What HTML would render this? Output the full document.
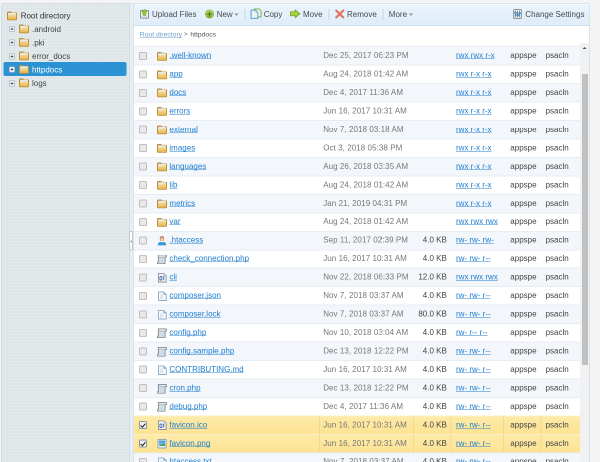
<!DOCTYPE html>
<html><head><meta charset="utf-8">
<style>
*{box-sizing:border-box;margin:0;padding:0}
html,body{width:600px;height:462px;overflow:hidden;background:#f4f4f4;font-family:"Liberation Sans",sans-serif;font-size:8px;color:#333}
#side{position:absolute;left:1px;top:3px;width:129px;height:470px;background:#dde5e8;border:1px solid #cfdce6;border-radius:3px 0 0 0;
 background-image:linear-gradient(rgba(255,255,255,.14) 1px,transparent 1px),linear-gradient(90deg,rgba(255,255,255,.14) 1px,transparent 1px);background-size:3px 3px}
.t{position:absolute;height:13.5px;line-height:13.5px;white-space:nowrap;color:#444}
.t svg.ex{position:absolute;left:7px;top:3.9px}
.t svg{position:absolute;top:2.25px}
.t span{position:absolute}
.t.sel .tx{color:#fff}
#selbg{position:absolute;left:1.7px;top:58px;width:122.6px;height:13.8px;background:#2b92d4;border-radius:2px}
#split{position:absolute;left:128.8px;top:231px;width:4px;height:19.6px;background:#fff;border:1px solid #bfc8ce;border-radius:1px}
#main{position:absolute;left:133px;top:3px;width:457px;height:470px;background:#fff;border:1px solid #d6e4ee;border-radius:0 3px 0 0;overflow:hidden}
#tb{position:absolute;left:0;top:0;right:0;height:22px;background:linear-gradient(#eaf4fc,#dfedf9);box-shadow:inset 0 1px #f2f8fd;border-bottom:1px solid #cde0f0}
.tbi{position:absolute;top:-0.5px;height:22px;line-height:22px;white-space:nowrap;color:#4a4a4a}
.tbic{position:absolute}
.sep{position:absolute;top:5px;width:0.8px;height:11px;background:#c6d6e2}
.car{position:absolute;top:9.3px;width:0;height:0;border-left:2.3px solid transparent;border-right:2.3px solid transparent;border-top:2.6px solid #8a8f94}
#bc{position:absolute;left:5.8px;top:19.8px;height:21px;line-height:21px;font-size:6.8px;color:#555;white-space:nowrap}
#bc a{color:#6b9dcc;text-decoration:underline;text-decoration-skip-ink:none}
.r{position:absolute;left:0;width:446px;height:18.46px;line-height:18.46px;background:#fff;border-top:1px solid #e6edf3;white-space:nowrap}
.r.odd{background:#f3f7fb}
.r.sel{background:linear-gradient(#feeba9,#fde393);border-top-color:#fdf0c6}
.cb{position:absolute;left:5.1px;top:4.7px;width:8px;height:8px;border:1px solid #bfbfbf;border-radius:1.5px;background:#e8e8e8}
.cb.on{border-color:#8a9aa5;background:#f0f0f0}
.cb.on:after{content:"";position:absolute;left:1.6px;top:0.2px;width:2.2px;height:4px;border-right:1.3px solid #222;border-bottom:1.3px solid #222;transform:rotate(40deg)}
.ic{position:absolute;left:23px;top:3.8px}
.ic.fo{top:4.6px}
a{color:#1f7dd0;text-decoration:underline;text-decoration-skip-ink:none}
.nm,.dt,.sz,.pm,.ow,.gr{top:-0.6px}
.nm{position:absolute;left:35.4px}
.dt{position:absolute;left:189.2px;color:#777;letter-spacing:0.065px}
.sz{position:absolute;right:133.2px;color:#444}
.pm{position:absolute;left:322px}
.ow{position:absolute;left:376.3px;color:#444}
.gr{position:absolute;left:411.6px;color:#444}
.r i{display:none}
.r.sel i{display:block;position:absolute;top:0;bottom:0;width:1px;background:#f2d98c}
.s1{left:185px}.s2{left:279px}.s3{left:316.5px}.s4{left:369px}.s5{left:406.5px}
#sb{position:absolute;left:446px;top:39px;width:9px;height:430px;background:#f1f1f1}
#sb .up{position:absolute;left:2.5px;top:4px;width:0;height:0;border-left:2.2px solid transparent;border-right:2.2px solid transparent;border-bottom:2.4px solid #505050}
#sb .th{position:absolute;left:2px;top:31px;width:6px;height:291px;background:#c1c1c1}
</style></head><body><div id="wrap" style="position:absolute;left:0;top:0;width:1200px;height:924px;transform:scale(.5);transform-origin:0 0;will-change:transform;overflow:hidden"><div style="zoom:2;position:absolute;left:0;top:0;width:600px;height:462px;overflow:hidden">
<svg width="0" height="0" style="position:absolute"><defs>
<linearGradient id="fg" x1="0" y1="0" x2="0" y2="1"><stop offset="0" stop-color="#f8de92"/><stop offset="1" stop-color="#e5b453"/></linearGradient>
<linearGradient id="gg" x1="0" y1="0" x2="0" y2="1"><stop offset="0" stop-color="#c6e66a"/><stop offset="1" stop-color="#86b52c"/></linearGradient>
</defs></svg>
<div id="side">
 <div id="selbg"></div>
 <div class="t" style="left:0;top:5.1px"><svg style="left:5px" width="10" height="9" viewBox="0 0 10 9"><path d="M0 1.2 Q0 0 1.2 0 H4.2 L5 0.9 H8.8 Q10 0.9 10 2.1 V7.8 Q10 8.8 8.8 8.8 H1.2 Q0 8.8 0 7.8Z" fill="#be8c33"/><rect x="1.1" y="1.3" width="7.8" height="2.6" fill="#e6eaec"/><path d="M0.9 3.9 H4 L4.8 2.9 H9.1 V7.5 Q9.1 8 8.6 8 H1.4 Q0.9 8 0.9 7.5Z" fill="url(#fg)"/></svg><span class="tx" style="left:18.7px;color:#333">Root directory</span></div>
<div class="t" style="left:0;top:18.25px"><svg class="ex" width="6" height="6" viewBox="0 0 6 6"><rect x="0.4" y="0.4" width="5.2" height="5.2" rx="0.6" fill="#fbfcfd" stroke="#a2b5c3" stroke-width="0.8"/><path d="M1.7 3 H4.3 M3 1.7 V4.3" stroke="#2c2c2c" stroke-width="0.8"/></svg><svg style="left:17px" width="10" height="9" viewBox="0 0 10 9"><path d="M0 1.2 Q0 0 1.2 0 H4.2 L5 0.9 H8.8 Q10 0.9 10 2.1 V7.8 Q10 8.8 8.8 8.8 H1.2 Q0 8.8 0 7.8Z" fill="#be8c33"/><rect x="1.1" y="1.3" width="7.8" height="2.6" fill="#e6eaec"/><path d="M0.9 3.9 H4 L4.8 2.9 H9.1 V7.5 Q9.1 8 8.6 8 H1.4 Q0.9 8 0.9 7.5Z" fill="url(#fg)"/></svg><span class="tx" style="left:30px">.android</span></div>
<div class="t" style="left:0;top:31.85px"><svg class="ex" width="6" height="6" viewBox="0 0 6 6"><rect x="0.4" y="0.4" width="5.2" height="5.2" rx="0.6" fill="#fbfcfd" stroke="#a2b5c3" stroke-width="0.8"/><path d="M1.7 3 H4.3 M3 1.7 V4.3" stroke="#2c2c2c" stroke-width="0.8"/></svg><svg style="left:17px" width="10" height="9" viewBox="0 0 10 9"><path d="M0 1.2 Q0 0 1.2 0 H4.2 L5 0.9 H8.8 Q10 0.9 10 2.1 V7.8 Q10 8.8 8.8 8.8 H1.2 Q0 8.8 0 7.8Z" fill="#be8c33"/><rect x="1.1" y="1.3" width="7.8" height="2.6" fill="#e6eaec"/><path d="M0.9 3.9 H4 L4.8 2.9 H9.1 V7.5 Q9.1 8 8.6 8 H1.4 Q0.9 8 0.9 7.5Z" fill="url(#fg)"/></svg><span class="tx" style="left:30px">.pki</span></div>
<div class="t" style="left:0;top:45.45px"><svg class="ex" width="6" height="6" viewBox="0 0 6 6"><rect x="0.4" y="0.4" width="5.2" height="5.2" rx="0.6" fill="#fbfcfd" stroke="#a2b5c3" stroke-width="0.8"/><path d="M1.7 3 H4.3 M3 1.7 V4.3" stroke="#2c2c2c" stroke-width="0.8"/></svg><svg style="left:17px" width="10" height="9" viewBox="0 0 10 9"><path d="M0 1.2 Q0 0 1.2 0 H4.2 L5 0.9 H8.8 Q10 0.9 10 2.1 V7.8 Q10 8.8 8.8 8.8 H1.2 Q0 8.8 0 7.8Z" fill="#be8c33"/><rect x="1.1" y="1.3" width="7.8" height="2.6" fill="#e6eaec"/><path d="M0.9 3.9 H4 L4.8 2.9 H9.1 V7.5 Q9.1 8 8.6 8 H1.4 Q0.9 8 0.9 7.5Z" fill="url(#fg)"/></svg><span class="tx" style="left:30px">error_docs</span></div>
<div class="t sel" style="left:0;top:58.85px"><svg class="ex" width="6" height="6" viewBox="0 0 6 6"><rect x="0.4" y="0.4" width="5.2" height="5.2" rx="0.6" fill="#fbfcfd" stroke="#a2b5c3" stroke-width="0.8"/><path d="M1.7 3 H4.3 M3 1.7 V4.3" stroke="#2c2c2c" stroke-width="0.8"/></svg><svg style="left:17px" width="10" height="9" viewBox="0 0 10 9"><path d="M0 1.2 Q0 0 1.2 0 H4.2 L5 0.9 H8.8 Q10 0.9 10 2.1 V7.8 Q10 8.8 8.8 8.8 H1.2 Q0 8.8 0 7.8Z" fill="#be8c33"/><rect x="1.1" y="1.3" width="7.8" height="2.6" fill="#e6eaec"/><path d="M0.9 3.9 H4 L4.8 2.9 H9.1 V7.5 Q9.1 8 8.6 8 H1.4 Q0.9 8 0.9 7.5Z" fill="url(#fg)"/></svg><span class="tx" style="left:30px">httpdocs</span></div>
<div class="t" style="left:0;top:72.45px"><svg class="ex" width="6" height="6" viewBox="0 0 6 6"><rect x="0.4" y="0.4" width="5.2" height="5.2" rx="0.6" fill="#fbfcfd" stroke="#a2b5c3" stroke-width="0.8"/><path d="M1.7 3 H4.3 M3 1.7 V4.3" stroke="#2c2c2c" stroke-width="0.8"/></svg><svg style="left:17px" width="10" height="9" viewBox="0 0 10 9"><path d="M0 1.2 Q0 0 1.2 0 H4.2 L5 0.9 H8.8 Q10 0.9 10 2.1 V7.8 Q10 8.8 8.8 8.8 H1.2 Q0 8.8 0 7.8Z" fill="#be8c33"/><rect x="1.1" y="1.3" width="7.8" height="2.6" fill="#e6eaec"/><path d="M0.9 3.9 H4 L4.8 2.9 H9.1 V7.5 Q9.1 8 8.6 8 H1.4 Q0.9 8 0.9 7.5Z" fill="url(#fg)"/></svg><span class="tx" style="left:30px">logs</span></div>
</div>
<div id="gap" style="position:absolute;left:130px;top:3px;width:3px;height:470px;background:#eaeef0"></div>
<div id="split"><svg style="position:absolute;left:0.2px;top:8.2px" width="2" height="3" viewBox="0 0 2 3"><path d="M0.2 1.5 L1.8 0.2 V2.8Z" fill="#80878c"/></svg></div>
<div id="main">
 <div id="tb">
  <svg class="tbic" style="left:6px;top:4.8px" width="9" height="10" viewBox="0 0 9 10"><path d="M0.45 2 Q0.45 1.55 0.9 1.55 H8.1 Q8.55 1.55 8.55 2 V8.7 Q8.55 9.15 8.1 9.15 H0.9 Q0.45 9.15 0.45 8.7Z" fill="#f3f3f3" stroke="#85888b" stroke-width="0.9"/><path d="M1 6.6 H8 V8.6 H1Z" fill="#dadada"/><path d="M4.45 0.15 L7.3 3 H5.95 V6.2 H2.95 V3 H1.6Z" fill="#8fcd30" stroke="#5f9b1d" stroke-width="0.5"/></svg>
  <div class="tbi" style="left:18px">Upload Files</div>
  <svg class="tbic" style="left:70.8px;top:5.6px" width="9" height="9" viewBox="0 0 9 9"><circle cx="4.5" cy="4.5" r="4.1" fill="url(#gg)" stroke="#7aa62c" stroke-width="0.6"/><path d="M4.5 2 V7 M2 4.5 H7" stroke="#4b7a1c" stroke-width="1.3"/></svg>
  <div class="tbi" style="left:82.7px">New</div>
  <div class="car" style="left:100.5px"></div>
  <div class="sep" style="left:110.5px"></div>
  <svg class="tbic" style="left:116.6px;top:4.6px" width="11" height="10.5" viewBox="0 0 11 10.5"><path d="M3.9 0.5 H8.6 L10.5 2.4 V8.4 H3.9Z" fill="#f2f8ec" stroke="#78b43a" stroke-width="1"/><path d="M0.6 1.6 H5.1 L7.3 3.8 V9.9 H0.6Z" fill="#e9f2f9" stroke="#5c9fd4" stroke-width="1"/><path d="M4.9 1.6 V4 H7.3Z" fill="#9cc4e4"/></svg>
  <div class="tbi" style="left:129.7px">Copy</div>
  <svg class="tbic" style="left:156px;top:5.6px" width="10.5" height="8.6" viewBox="0 0 10.5 8.6"><path d="M0.4 2.2 H5.2 V0.4 L10 4.3 L5.2 8.2 V6.3 H0.4Z" fill="#a3d23a" stroke="#6c9a24" stroke-width="0.7" stroke-linejoin="round"/></svg>
  <div class="tbi" style="left:169px">Move</div>
  <div class="sep" style="left:194.7px"></div>
  <svg class="tbic" style="left:200.8px;top:5.5px" width="9.5" height="9" viewBox="0 0 9.5 9"><path d="M1.3 1.1 L8.2 7.9 M8.2 1.1 L1.3 7.9" stroke="#e0755f" stroke-width="2.2" stroke-linecap="round"/></svg>
  <div class="tbi" style="left:213px">Remove</div>
  <div class="sep" style="left:248.5px"></div>
  <div class="tbi" style="left:254.8px">More</div>
  <div class="car" style="left:274.8px"></div>
  <svg class="tbic" style="left:379px;top:4.9px" width="9" height="10" viewBox="0 0 9 10"><rect x="0.5" y="0.5" width="8" height="9" rx="1.2" fill="#dde1e4" stroke="#8b9297" stroke-width="0.9"/><rect x="1.1" y="1.1" width="6.8" height="2.6" fill="#fdfdfd"/><path d="M2.4 1.8 V7.8 M4.5 1.8 V7.8 M6.6 1.8 V7.8" stroke="#4d565d" stroke-width="0.7"/><rect x="1.2" y="2.6" width="2.4" height="2" rx="0.6" fill="#3b93d8"/><rect x="3.3" y="5.2" width="2.4" height="2" rx="0.6" fill="#3b93d8"/><rect x="5.4" y="3.2" width="2.4" height="2" rx="0.6" fill="#3b93d8"/></svg>
  <div class="tbi" style="left:391.3px">Change Settings</div>
 </div>
 <div id="bc"><a>Root directory</a> <span style="font-size:6.2px;color:#666;position:relative;top:-0.2px">&gt;</span> <span style="margin-left:0.8px">httpdocs</span></div>
 <div id="rows" style="position:absolute;left:0;top:-4px;width:457px">
<div class="r odd" style="top:46.20px"><span class="cb"></span><svg class="ic fo" width="10" height="9" viewBox="0 0 10 9"><path d="M0 1.2 Q0 0 1.2 0 H4.2 L5 0.9 H8.8 Q10 0.9 10 2.1 V7.8 Q10 8.8 8.8 8.8 H1.2 Q0 8.8 0 7.8Z" fill="#be8c33"/><rect x="1.1" y="1.3" width="7.8" height="2.6" fill="#e6eaec"/><path d="M0.9 3.9 H4 L4.8 2.9 H9.1 V7.5 Q9.1 8 8.6 8 H1.4 Q0.9 8 0.9 7.5Z" fill="url(#fg)"/></svg><a class="nm">.well-known</a><span class="dt">Dec 25, 2017 06:23 PM</span><span class="sz"></span><a class="pm">rwx rwx r-x</a><span class="ow">appspe</span><span class="gr">psacln</span><i class="s1"></i><i class="s2"></i><i class="s3"></i><i class="s4"></i><i class="s5"></i></div>
<div class="r" style="top:64.66px"><span class="cb"></span><svg class="ic fo" width="10" height="9" viewBox="0 0 10 9"><path d="M0 1.2 Q0 0 1.2 0 H4.2 L5 0.9 H8.8 Q10 0.9 10 2.1 V7.8 Q10 8.8 8.8 8.8 H1.2 Q0 8.8 0 7.8Z" fill="#be8c33"/><rect x="1.1" y="1.3" width="7.8" height="2.6" fill="#e6eaec"/><path d="M0.9 3.9 H4 L4.8 2.9 H9.1 V7.5 Q9.1 8 8.6 8 H1.4 Q0.9 8 0.9 7.5Z" fill="url(#fg)"/></svg><a class="nm">app</a><span class="dt">Aug 24, 2018 01:42 AM</span><span class="sz"></span><a class="pm">rwx r-x r-x</a><span class="ow">appspe</span><span class="gr">psacln</span><i class="s1"></i><i class="s2"></i><i class="s3"></i><i class="s4"></i><i class="s5"></i></div>
<div class="r odd" style="top:83.12px"><span class="cb"></span><svg class="ic fo" width="10" height="9" viewBox="0 0 10 9"><path d="M0 1.2 Q0 0 1.2 0 H4.2 L5 0.9 H8.8 Q10 0.9 10 2.1 V7.8 Q10 8.8 8.8 8.8 H1.2 Q0 8.8 0 7.8Z" fill="#be8c33"/><rect x="1.1" y="1.3" width="7.8" height="2.6" fill="#e6eaec"/><path d="M0.9 3.9 H4 L4.8 2.9 H9.1 V7.5 Q9.1 8 8.6 8 H1.4 Q0.9 8 0.9 7.5Z" fill="url(#fg)"/></svg><a class="nm">docs</a><span class="dt">Dec 4, 2017 11:36 AM</span><span class="sz"></span><a class="pm">rwx r-x r-x</a><span class="ow">appspe</span><span class="gr">psacln</span><i class="s1"></i><i class="s2"></i><i class="s3"></i><i class="s4"></i><i class="s5"></i></div>
<div class="r" style="top:101.58px"><span class="cb"></span><svg class="ic fo" width="10" height="9" viewBox="0 0 10 9"><path d="M0 1.2 Q0 0 1.2 0 H4.2 L5 0.9 H8.8 Q10 0.9 10 2.1 V7.8 Q10 8.8 8.8 8.8 H1.2 Q0 8.8 0 7.8Z" fill="#be8c33"/><rect x="1.1" y="1.3" width="7.8" height="2.6" fill="#e6eaec"/><path d="M0.9 3.9 H4 L4.8 2.9 H9.1 V7.5 Q9.1 8 8.6 8 H1.4 Q0.9 8 0.9 7.5Z" fill="url(#fg)"/></svg><a class="nm">errors</a><span class="dt">Jun 16, 2017 10:31 AM</span><span class="sz"></span><a class="pm">rwx r-x r-x</a><span class="ow">appspe</span><span class="gr">psacln</span><i class="s1"></i><i class="s2"></i><i class="s3"></i><i class="s4"></i><i class="s5"></i></div>
<div class="r odd" style="top:120.04px"><span class="cb"></span><svg class="ic fo" width="10" height="9" viewBox="0 0 10 9"><path d="M0 1.2 Q0 0 1.2 0 H4.2 L5 0.9 H8.8 Q10 0.9 10 2.1 V7.8 Q10 8.8 8.8 8.8 H1.2 Q0 8.8 0 7.8Z" fill="#be8c33"/><rect x="1.1" y="1.3" width="7.8" height="2.6" fill="#e6eaec"/><path d="M0.9 3.9 H4 L4.8 2.9 H9.1 V7.5 Q9.1 8 8.6 8 H1.4 Q0.9 8 0.9 7.5Z" fill="url(#fg)"/></svg><a class="nm">external</a><span class="dt">Nov 7, 2018 03:18 AM</span><span class="sz"></span><a class="pm">rwx r-x r-x</a><span class="ow">appspe</span><span class="gr">psacln</span><i class="s1"></i><i class="s2"></i><i class="s3"></i><i class="s4"></i><i class="s5"></i></div>
<div class="r" style="top:138.50px"><span class="cb"></span><svg class="ic fo" width="10" height="9" viewBox="0 0 10 9"><path d="M0 1.2 Q0 0 1.2 0 H4.2 L5 0.9 H8.8 Q10 0.9 10 2.1 V7.8 Q10 8.8 8.8 8.8 H1.2 Q0 8.8 0 7.8Z" fill="#be8c33"/><rect x="1.1" y="1.3" width="7.8" height="2.6" fill="#e6eaec"/><path d="M0.9 3.9 H4 L4.8 2.9 H9.1 V7.5 Q9.1 8 8.6 8 H1.4 Q0.9 8 0.9 7.5Z" fill="url(#fg)"/></svg><a class="nm">images</a><span class="dt">Oct 3, 2018 05:38 PM</span><span class="sz"></span><a class="pm">rwx r-x r-x</a><span class="ow">appspe</span><span class="gr">psacln</span><i class="s1"></i><i class="s2"></i><i class="s3"></i><i class="s4"></i><i class="s5"></i></div>
<div class="r odd" style="top:156.96px"><span class="cb"></span><svg class="ic fo" width="10" height="9" viewBox="0 0 10 9"><path d="M0 1.2 Q0 0 1.2 0 H4.2 L5 0.9 H8.8 Q10 0.9 10 2.1 V7.8 Q10 8.8 8.8 8.8 H1.2 Q0 8.8 0 7.8Z" fill="#be8c33"/><rect x="1.1" y="1.3" width="7.8" height="2.6" fill="#e6eaec"/><path d="M0.9 3.9 H4 L4.8 2.9 H9.1 V7.5 Q9.1 8 8.6 8 H1.4 Q0.9 8 0.9 7.5Z" fill="url(#fg)"/></svg><a class="nm">languages</a><span class="dt">Aug 26, 2018 03:35 AM</span><span class="sz"></span><a class="pm">rwx r-x r-x</a><span class="ow">appspe</span><span class="gr">psacln</span><i class="s1"></i><i class="s2"></i><i class="s3"></i><i class="s4"></i><i class="s5"></i></div>
<div class="r" style="top:175.42px"><span class="cb"></span><svg class="ic fo" width="10" height="9" viewBox="0 0 10 9"><path d="M0 1.2 Q0 0 1.2 0 H4.2 L5 0.9 H8.8 Q10 0.9 10 2.1 V7.8 Q10 8.8 8.8 8.8 H1.2 Q0 8.8 0 7.8Z" fill="#be8c33"/><rect x="1.1" y="1.3" width="7.8" height="2.6" fill="#e6eaec"/><path d="M0.9 3.9 H4 L4.8 2.9 H9.1 V7.5 Q9.1 8 8.6 8 H1.4 Q0.9 8 0.9 7.5Z" fill="url(#fg)"/></svg><a class="nm">lib</a><span class="dt">Aug 24, 2018 01:42 AM</span><span class="sz"></span><a class="pm">rwx r-x r-x</a><span class="ow">appspe</span><span class="gr">psacln</span><i class="s1"></i><i class="s2"></i><i class="s3"></i><i class="s4"></i><i class="s5"></i></div>
<div class="r odd" style="top:193.88px"><span class="cb"></span><svg class="ic fo" width="10" height="9" viewBox="0 0 10 9"><path d="M0 1.2 Q0 0 1.2 0 H4.2 L5 0.9 H8.8 Q10 0.9 10 2.1 V7.8 Q10 8.8 8.8 8.8 H1.2 Q0 8.8 0 7.8Z" fill="#be8c33"/><rect x="1.1" y="1.3" width="7.8" height="2.6" fill="#e6eaec"/><path d="M0.9 3.9 H4 L4.8 2.9 H9.1 V7.5 Q9.1 8 8.6 8 H1.4 Q0.9 8 0.9 7.5Z" fill="url(#fg)"/></svg><a class="nm">metrics</a><span class="dt">Jan 21, 2019 04:31 PM</span><span class="sz"></span><a class="pm">rwx r-x r-x</a><span class="ow">appspe</span><span class="gr">psacln</span><i class="s1"></i><i class="s2"></i><i class="s3"></i><i class="s4"></i><i class="s5"></i></div>
<div class="r" style="top:212.34px"><span class="cb"></span><svg class="ic fo" width="10" height="9" viewBox="0 0 10 9"><path d="M0 1.2 Q0 0 1.2 0 H4.2 L5 0.9 H8.8 Q10 0.9 10 2.1 V7.8 Q10 8.8 8.8 8.8 H1.2 Q0 8.8 0 7.8Z" fill="#be8c33"/><rect x="1.1" y="1.3" width="7.8" height="2.6" fill="#e6eaec"/><path d="M0.9 3.9 H4 L4.8 2.9 H9.1 V7.5 Q9.1 8 8.6 8 H1.4 Q0.9 8 0.9 7.5Z" fill="url(#fg)"/></svg><a class="nm">var</a><span class="dt">Aug 24, 2018 01:42 AM</span><span class="sz"></span><a class="pm">rwx rwx rwx</a><span class="ow">appspe</span><span class="gr">psacln</span><i class="s1"></i><i class="s2"></i><i class="s3"></i><i class="s4"></i><i class="s5"></i></div>
<div class="r odd" style="top:230.80px"><span class="cb"></span><svg class="ic" width="10" height="10" viewBox="0 0 10 10"><path d="M2.8 3.5 Q2.6 0.6 4.9 0.6 Q7.3 0.6 7.1 3.5 Q7 5.8 4.9 5.8 Q2.9 5.8 2.8 3.5Z" fill="#b77a4e"/><ellipse cx="4.95" cy="3.9" rx="1.55" ry="1.75" fill="#f3cdb3"/><path d="M0.8 9.9 Q0.8 6.6 3.6 6.4 L4.95 7 L6.3 6.4 Q9.2 6.6 9.2 9.9Z" fill="#3a97d8"/></svg><a class="nm">.htaccess</a><span class="dt">Sep 11, 2017 02:39 PM</span><span class="sz">4.0 KB</span><a class="pm">rw- rw- rw-</a><span class="ow">appspe</span><span class="gr">psacln</span><i class="s1"></i><i class="s2"></i><i class="s3"></i><i class="s4"></i><i class="s5"></i></div>
<div class="r" style="top:249.26px"><span class="cb"></span><svg class="ic" width="10" height="10" viewBox="0 0 10 10"><path d="M1.3 0.9 H8.7 Q9.6 0.9 9.6 2.05 Q9.6 3.2 8.7 3.2 H8.1 V8.8 Q8.1 9.8 7.1 9.8 H1 Q0.2 9.8 0.2 8.9 Q0.2 8 1 8 H1.3 Z" fill="#dde7ee" stroke="#777d82" stroke-width="0.8"/><path d="M2.1 3.3 H7.3 V8.9 H2.1Z" fill="#cddde8"/><path d="M1.3 3.2 H8.1" stroke="#9aa2a7" stroke-width="0.5"/></svg><a class="nm">check_connection.php</a><span class="dt">Jun 16, 2017 10:31 AM</span><span class="sz">4.0 KB</span><a class="pm">rw- rw- r--</a><span class="ow">appspe</span><span class="gr">psacln</span><i class="s1"></i><i class="s2"></i><i class="s3"></i><i class="s4"></i><i class="s5"></i></div>
<div class="r odd" style="top:267.72px"><span class="cb"></span><svg class="ic" width="10" height="10" viewBox="0 0 10 10"><path d="M1.5 0.9 H6.8 L9.2 3.3 V9.5 H1.5Z" fill="#f5f7f9" stroke="#8a9197" stroke-width="0.9"/><path d="M6.6 1 V3.5 H9.1Z" fill="#c3c9ce"/><rect x="2.9" y="3.9" width="2" height="3.7" rx="0.9" fill="none" stroke="#3d63a3" stroke-width="0.85"/><path d="M6.8 3.8 V7.7 M6 4.5 L6.8 3.8" stroke="#3d63a3" stroke-width="0.85"/></svg><a class="nm">cli</a><span class="dt">Nov 22, 2018 06:33 PM</span><span class="sz">12.0 KB</span><a class="pm">rwx rwx rwx</a><span class="ow">appspe</span><span class="gr">psacln</span><i class="s1"></i><i class="s2"></i><i class="s3"></i><i class="s4"></i><i class="s5"></i></div>
<div class="r" style="top:286.18px"><span class="cb"></span><svg class="ic" width="10" height="10" viewBox="0 0 10 10"><path d="M1.5 0.9 H6.6 L9.3 3.6 V9.5 H1.5Z" fill="#f7fafd" stroke="#8aacc8" stroke-width="0.9"/><path d="M6.4 1 V3.8 H9.2Z" fill="#86aacb"/><rect x="3" y="3.4" width="3.2" height="4.8" fill="#dce9f3"/></svg><a class="nm">composer.json</a><span class="dt">Nov 7, 2018 03:37 AM</span><span class="sz">4.0 KB</span><a class="pm">rw- rw- r--</a><span class="ow">appspe</span><span class="gr">psacln</span><i class="s1"></i><i class="s2"></i><i class="s3"></i><i class="s4"></i><i class="s5"></i></div>
<div class="r odd" style="top:304.64px"><span class="cb"></span><svg class="ic" width="10" height="10" viewBox="0 0 10 10"><path d="M1.5 0.9 H6.6 L9.3 3.6 V9.5 H1.5Z" fill="#f7fafd" stroke="#8aacc8" stroke-width="0.9"/><path d="M6.4 1 V3.8 H9.2Z" fill="#86aacb"/><rect x="3" y="3.4" width="3.2" height="4.8" fill="#dce9f3"/></svg><a class="nm">composer.lock</a><span class="dt">Nov 7, 2018 03:37 AM</span><span class="sz">80.0 KB</span><a class="pm">rw- rw- r--</a><span class="ow">appspe</span><span class="gr">psacln</span><i class="s1"></i><i class="s2"></i><i class="s3"></i><i class="s4"></i><i class="s5"></i></div>
<div class="r" style="top:323.10px"><span class="cb"></span><svg class="ic" width="10" height="10" viewBox="0 0 10 10"><path d="M1.3 0.9 H8.7 Q9.6 0.9 9.6 2.05 Q9.6 3.2 8.7 3.2 H8.1 V8.8 Q8.1 9.8 7.1 9.8 H1 Q0.2 9.8 0.2 8.9 Q0.2 8 1 8 H1.3 Z" fill="#dde7ee" stroke="#777d82" stroke-width="0.8"/><path d="M2.1 3.3 H7.3 V8.9 H2.1Z" fill="#cddde8"/><path d="M1.3 3.2 H8.1" stroke="#9aa2a7" stroke-width="0.5"/></svg><a class="nm">config.php</a><span class="dt">Nov 10, 2018 03:04 AM</span><span class="sz">4.0 KB</span><a class="pm">rw- r-- r--</a><span class="ow">appspe</span><span class="gr">psacln</span><i class="s1"></i><i class="s2"></i><i class="s3"></i><i class="s4"></i><i class="s5"></i></div>
<div class="r odd" style="top:341.56px"><span class="cb"></span><svg class="ic" width="10" height="10" viewBox="0 0 10 10"><path d="M1.3 0.9 H8.7 Q9.6 0.9 9.6 2.05 Q9.6 3.2 8.7 3.2 H8.1 V8.8 Q8.1 9.8 7.1 9.8 H1 Q0.2 9.8 0.2 8.9 Q0.2 8 1 8 H1.3 Z" fill="#dde7ee" stroke="#777d82" stroke-width="0.8"/><path d="M2.1 3.3 H7.3 V8.9 H2.1Z" fill="#cddde8"/><path d="M1.3 3.2 H8.1" stroke="#9aa2a7" stroke-width="0.5"/></svg><a class="nm">config.sample.php</a><span class="dt">Dec 13, 2018 12:22 PM</span><span class="sz">4.0 KB</span><a class="pm">rw- rw- r--</a><span class="ow">appspe</span><span class="gr">psacln</span><i class="s1"></i><i class="s2"></i><i class="s3"></i><i class="s4"></i><i class="s5"></i></div>
<div class="r" style="top:360.02px"><span class="cb"></span><svg class="ic" width="10" height="10" viewBox="0 0 10 10"><path d="M1.5 0.9 H6.6 L9.3 3.6 V9.5 H1.5Z" fill="#f7fafd" stroke="#8aacc8" stroke-width="0.9"/><path d="M6.4 1 V3.8 H9.2Z" fill="#86aacb"/><rect x="3" y="3.4" width="3.2" height="4.8" fill="#dce9f3"/></svg><a class="nm">CONTRIBUTING.md</a><span class="dt">Jun 16, 2017 10:31 AM</span><span class="sz">4.0 KB</span><a class="pm">rw- rw- r--</a><span class="ow">appspe</span><span class="gr">psacln</span><i class="s1"></i><i class="s2"></i><i class="s3"></i><i class="s4"></i><i class="s5"></i></div>
<div class="r odd" style="top:378.48px"><span class="cb"></span><svg class="ic" width="10" height="10" viewBox="0 0 10 10"><path d="M1.3 0.9 H8.7 Q9.6 0.9 9.6 2.05 Q9.6 3.2 8.7 3.2 H8.1 V8.8 Q8.1 9.8 7.1 9.8 H1 Q0.2 9.8 0.2 8.9 Q0.2 8 1 8 H1.3 Z" fill="#dde7ee" stroke="#777d82" stroke-width="0.8"/><path d="M2.1 3.3 H7.3 V8.9 H2.1Z" fill="#cddde8"/><path d="M1.3 3.2 H8.1" stroke="#9aa2a7" stroke-width="0.5"/></svg><a class="nm">cron.php</a><span class="dt">Dec 13, 2018 12:22 PM</span><span class="sz">4.0 KB</span><a class="pm">rw- rw- r--</a><span class="ow">appspe</span><span class="gr">psacln</span><i class="s1"></i><i class="s2"></i><i class="s3"></i><i class="s4"></i><i class="s5"></i></div>
<div class="r" style="top:396.94px"><span class="cb"></span><svg class="ic" width="10" height="10" viewBox="0 0 10 10"><path d="M1.3 0.9 H8.7 Q9.6 0.9 9.6 2.05 Q9.6 3.2 8.7 3.2 H8.1 V8.8 Q8.1 9.8 7.1 9.8 H1 Q0.2 9.8 0.2 8.9 Q0.2 8 1 8 H1.3 Z" fill="#dde7ee" stroke="#777d82" stroke-width="0.8"/><path d="M2.1 3.3 H7.3 V8.9 H2.1Z" fill="#cddde8"/><path d="M1.3 3.2 H8.1" stroke="#9aa2a7" stroke-width="0.5"/></svg><a class="nm">debug.php</a><span class="dt">Dec 4, 2017 11:36 AM</span><span class="sz">4.0 KB</span><a class="pm">rw- rw- r--</a><span class="ow">appspe</span><span class="gr">psacln</span><i class="s1"></i><i class="s2"></i><i class="s3"></i><i class="s4"></i><i class="s5"></i></div>
<div class="r odd sel" style="top:415.40px"><span class="cb on"></span><svg class="ic" width="10" height="10" viewBox="0 0 10 10"><path d="M1.5 0.9 H6.8 L9.2 3.3 V9.5 H1.5Z" fill="#f5f7f9" stroke="#8a9197" stroke-width="0.9"/><path d="M6.6 1 V3.5 H9.1Z" fill="#c3c9ce"/><rect x="2.9" y="3.9" width="2" height="3.7" rx="0.9" fill="none" stroke="#3d63a3" stroke-width="0.85"/><path d="M6.8 3.8 V7.7 M6 4.5 L6.8 3.8" stroke="#3d63a3" stroke-width="0.85"/></svg><a class="nm">favicon.ico</a><span class="dt">Jun 16, 2017 10:31 AM</span><span class="sz">4.0 KB</span><a class="pm">rw- rw- r--</a><span class="ow">appspe</span><span class="gr">psacln</span><i class="s1"></i><i class="s2"></i><i class="s3"></i><i class="s4"></i><i class="s5"></i></div>
<div class="r sel" style="top:433.86px"><span class="cb on"></span><svg class="ic" width="10" height="10" viewBox="0 0 10 10"><defs><linearGradient id="sky" x1="0" y1="0" x2="0" y2="1"><stop offset="0" stop-color="#3c93da"/><stop offset="1" stop-color="#8fcdf6"/></linearGradient></defs><rect x="1" y="0.9" width="8.2" height="8.6" rx="0.7" fill="#f4f7f9" stroke="#7f9db5" stroke-width="0.9"/><rect x="2" y="2" width="6.2" height="5.4" fill="url(#sky)"/><path d="M2 7.4 L3.6 5.9 L4.8 6.5 L6.4 4.9 L8.2 6.4 V7.4Z" fill="#58902c"/></svg><a class="nm">favicon.png</a><span class="dt">Jun 16, 2017 10:31 AM</span><span class="sz">4.0 KB</span><a class="pm">rw- rw- r--</a><span class="ow">appspe</span><span class="gr">psacln</span><i class="s1"></i><i class="s2"></i><i class="s3"></i><i class="s4"></i><i class="s5"></i></div>
<div class="r odd" style="top:452.32px"><span class="cb"></span><svg class="ic" width="10" height="10" viewBox="0 0 10 10"><path d="M1.5 0.9 H6.6 L9.3 3.6 V9.5 H1.5Z" fill="#f7fafd" stroke="#8aacc8" stroke-width="0.9"/><path d="M6.4 1 V3.8 H9.2Z" fill="#86aacb"/><rect x="3" y="3.4" width="3.2" height="4.8" fill="#dce9f3"/></svg><a class="nm">htaccess.txt</a><span class="dt">Nov 7, 2018 03:37 AM</span><span class="sz">4.0 KB</span><a class="pm">rw- rw- r--</a><span class="ow">appspe</span><span class="gr">psacln</span><i class="s1"></i><i class="s2"></i><i class="s3"></i><i class="s4"></i><i class="s5"></i></div>
 </div>
 <div id="sb"><div class="up"></div><div class="th"></div></div>
</div>
</div></div></body></html>
